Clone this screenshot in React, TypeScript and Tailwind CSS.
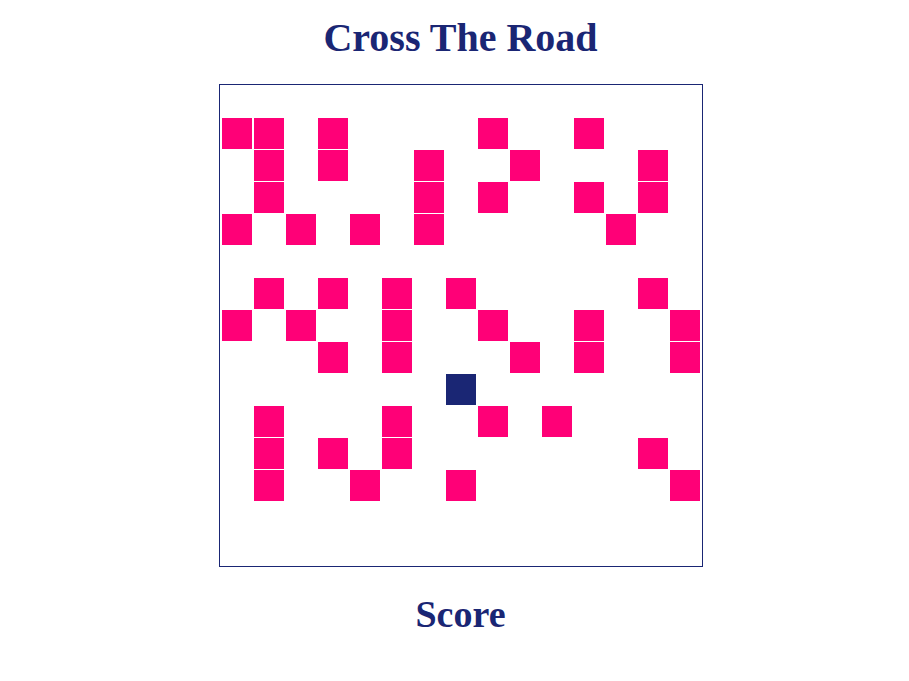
import React from 'react';

// car positions per row (column indexes), 15x15 board
const CARS: number[][] = [
  [],
  [0, 1, 3, 8, 11],
  [1, 3, 6, 9, 13],
  [1, 6, 8, 11, 13],
  [0, 2, 4, 6, 12],
  [],
  [1, 3, 5, 7, 13],
  [0, 2, 5, 8, 11, 14],
  [3, 5, 9, 11, 14],
  [],
  [1, 5, 8, 10],
  [1, 3, 5, 13],
  [1, 4, 7, 14],
  [],
  [],
];

const PLAYER = { row: 9, col: 7 };

const Cell: React.FC<{ kind: 'empty' | 'car' | 'player' }> = ({ kind }) => {
  if (kind === 'car') return <div className="w-[30px] h-[31px] bg-[#ff0077]" />;
  if (kind === 'player') return <div className="w-[30px] h-[31px] bg-[#1a2674]" />;
  return <div className="w-[30px] h-[31px]" />;
};

export default function App() {
  const cells = [];
  for (let r = 0; r < 15; r++) {
    for (let c = 0; c < 15; c++) {
      let kind: 'empty' | 'car' | 'player' = 'empty';
      if (CARS[r].includes(c)) kind = 'car';
      if (r === PLAYER.row && c === PLAYER.col) kind = 'player';
      cells.push(<Cell key={`${r}-${c}`} kind={kind} />);
    }
  }

  return (
    <div className="min-h-[681px] w-full bg-white flex flex-col items-center pl-[12px] font-['Liberation_Serif','Times_New_Roman',serif] text-[#1a2674]">
      <h1 className="mt-[15px] text-[40px] leading-[46px] font-bold">Cross The Road</h1>
      <div className="mt-[23px] border border-[#1a2674] pt-[1px] pb-[1px] px-[2px]">
        <div className="grid grid-cols-[repeat(15,30px)] gap-x-[2px] gap-y-[1px]">{cells}</div>
      </div>
      <h2 className="mt-[25px] text-[38px] leading-[44px] font-bold">Score</h2>
    </div>
  );
}
